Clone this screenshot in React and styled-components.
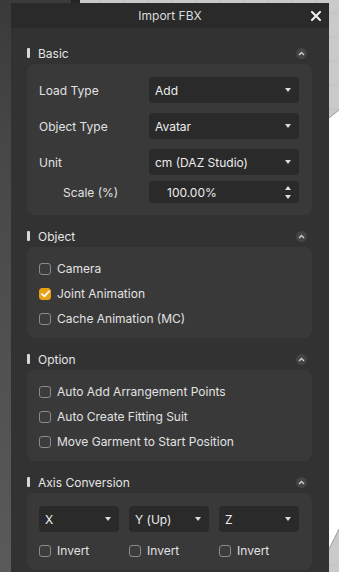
import React from "react";
import styled, { createGlobalStyle } from "styled-components";

const Global = createGlobalStyle`
  html, body { margin: 0; padding: 0; }
  body { font-family: Inter, "Noto Sans", Arial, sans-serif; background: #c9c9c9; }
  * { box-sizing: border-box; }
`;

const Page = styled.div`
  position: relative;
  width: 339px;
  height: 572px;
  overflow: hidden;
  padding: 3px 10px 0 11px;
`;

const Backdrop = styled.svg`
  position: absolute;
  inset: 0;
  z-index: 0;
`;

const Dialog = styled.div`
  position: relative;
  z-index: 1;
  width: 318px;
  height: 600px;
  background: #323232;
  display: flex;
  flex-direction: column;
`;

const TitleBar = styled.div`
  height: 25px;
  background: #2a2a2a;
  display: flex;
  align-items: center;
  justify-content: center;
  position: relative;
  color: #dcdcdc;
  font-size: 12px;
`;

const CloseButton = styled.button`
  position: absolute;
  right: 8px;
  top: 7px;
  width: 11px;
  height: 11px;
  padding: 0;
  border: 0;
  background: none;
  display: flex;
  align-items: center;
  justify-content: center;
`;

const Body = styled.div`
  padding: 14px 17px 0 16px;
  display: flex;
  flex-direction: column;
  gap: 10px;
`;

const Section = styled.section`
  display: flex;
  flex-direction: column;
`;

const Header = styled.div`
  height: 22px;
  display: flex;
  align-items: center;
  color: #e4e4e4;
  font-size: 12px;
  padding-right: 5px;
`;

const HeaderBar = styled.span`
  width: 3px;
  height: 10px;
  background: #d8d8d8;
  margin-right: 8px;
  border-radius: 1px;
`;

const HeaderTitle = styled.span`
  flex: 1;
`;

const CollapseIcon = styled.span`
  width: 11px;
  height: 11px;
  border-radius: 50%;
  background: #444;
  display: flex;
  align-items: center;
  justify-content: center;
`;

const Panel = styled.div`
  background: #393939;
  border-radius: 8px;
  padding: ${(p) => p.$pad || "9px 12px 7px"};
  display: flex;
  flex-direction: column;
  gap: ${(p) => p.$gap || "0px"};
`;

const FieldRow = styled.div`
  display: grid;
  grid-template-columns: 110px 150px;
  align-items: center;
  margin-top: ${(p) => p.$pullUp || 0}px;
`;

const Label = styled.span`
  color: #e2e2e2;
  font-size: 12px;
  padding-left: ${(p) => (p.$indent ? "24px" : "0")};
`;

const Select = styled.div`
  height: ${(p) => p.$h || 26}px;
  background: #2a2a2a;
  border-radius: 4px;
  display: flex;
  align-items: center;
  padding: 0 6px 0 ${(p) => p.$padLeft || 6}px;
  color: #ececec;
  font-size: 12px;
`;

const SelectText = styled.span`
  flex: 1;
  white-space: nowrap;
`;

const Arrow = styled.span`
  width: 0;
  height: 0;
  border-left: 3px solid transparent;
  border-right: 3px solid transparent;
  border-top: 4px solid #dcdcdc;
  margin-right: 2px;
`;

const Spinner = styled.span`
  display: flex;
  flex-direction: column;
  gap: 5px;
  margin-right: 2px;
`;

const SpinArrow = styled.span`
  width: 0;
  height: 0;
  border-left: 3px solid transparent;
  border-right: 3px solid transparent;
  ${(p) =>
    p.$up ? "border-bottom: 4px solid #e0e0e0;" : "border-top: 4px solid #e0e0e0;"}
`;

const CheckRow = styled.label`
  height: 25px;
  display: flex;
  align-items: center;
  gap: 6px;
  color: #e2e2e2;
  font-size: 12px;
`;

const Box = styled.span`
  width: 12px;
  height: 12px;
  border-radius: 3px;
  flex: none;
  background: ${(p) => (p.$checked ? "#e8a015" : "#3c3c3c")};
  border: 1px solid ${(p) => (p.$checked ? "#e8a015" : "#8a8a8a")};
  display: flex;
  align-items: center;
  justify-content: center;
`;

const AxisGrid = styled.div`
  display: grid;
  grid-template-columns: repeat(3, 80px);
  column-gap: 10px;
`;

function Check({ label, checked }) {
  return (
    <CheckRow>
      <Box $checked={checked}>
        {checked && (
          <svg width="9" height="8" viewBox="0 0 9 8">
            <path d="M1 4.2 L3.4 6.4 L8 1.4" fill="none" stroke="#ffffff" strokeWidth="1.8" strokeLinecap="round" strokeLinejoin="round" />
          </svg>
        )}
      </Box>
      <span>{label}</span>
    </CheckRow>
  );
}

function SectionBlock({ title, children }) {
  return (
    <Section>
      <Header>
        <HeaderBar />
        <HeaderTitle>{title}</HeaderTitle>
        <CollapseIcon>
          <svg width="7" height="5" viewBox="0 0 7 5">
            <path d="M1 4 L3.5 1.5 L6 4" fill="none" stroke="#cfcfcf" strokeWidth="1.4" />
          </svg>
        </CollapseIcon>
      </Header>
      {children}
    </Section>
  );
}

function Dropdown({ value }) {
  return (
    <Select>
      <SelectText>{value}</SelectText>
      <Arrow />
    </Select>
  );
}

function BackdropArt() {
  const vlines = [];
  for (let x = 4; x < 339; x += 24) vlines.push(x);
  const hlines = [];
  for (let y = 13; y < 572; y += 24) hlines.push(y);
  return (
    <Backdrop width="339" height="572" viewBox="0 0 339 572">
      <defs>
        <linearGradient id="leftg" x1="0" y1="0" x2="0" y2="1">
          <stop offset="0" stopColor="#3a3a3a" />
          <stop offset="0.25" stopColor="#474747" />
          <stop offset="1" stopColor="#5a5a5a" />
        </linearGradient>
      </defs>
      <rect x="0" y="0" width="339" height="572" fill="#cacaca" />
      {vlines.map((x) => (
        <line key={"v" + x} x1={x} y1="0" x2={x} y2="572" stroke="#bfbfbf" strokeWidth="1" />
      ))}
      {hlines.map((y) => (
        <line key={"h" + y} x1="0" y1={y} x2="339" y2={y} stroke="#bfbfbf" strokeWidth="1" />
      ))}
      <polygon points="329,118 339,110 339,529 329,549" fill="#ffffff" />
      <line x1="329" y1="118" x2="339" y2="110" stroke="#8a8a8a" strokeWidth="0.8" />
      <line x1="329" y1="549" x2="339" y2="529" stroke="#8a8a8a" strokeWidth="0.8" />
      <rect x="0" y="0" width="71" height="3" fill="#3b3b3d" />
      <rect x="71" y="0" width="9" height="3" fill="#252525" />
      <rect x="0" y="0" width="11" height="572" fill="url(#leftg)" />
    </Backdrop>
  );
}

export default function App() {
  return (
    <>
      <Global />
      <Page>
        <BackdropArt />
        <Dialog>
          <TitleBar>
            Import FBX
            <CloseButton aria-label="Close">
              <svg width="10" height="10" viewBox="0 0 10 10">
                <path d="M1 1 L9 9 M9 1 L1 9" stroke="#f2f2f2" strokeWidth="2" strokeLinecap="square" />
              </svg>
            </CloseButton>
          </TitleBar>
          <Body>
            <SectionBlock title="Basic">
              <Panel $pad="13px 12px 12px" $gap="10px">
                <FieldRow>
                  <Label>Load Type</Label>
                  <Dropdown value="Add" />
                </FieldRow>
                <FieldRow>
                  <Label>Object Type</Label>
                  <Dropdown value="Avatar" />
                </FieldRow>
                <FieldRow>
                  <Label>Unit</Label>
                  <Dropdown value="cm (DAZ Studio)" />
                </FieldRow>
                <FieldRow $pullUp={-4}>
                  <Label $indent>Scale (%)</Label>
                  <Select $h={22} $padLeft={18}>
                    <SelectText>100.00%</SelectText>
                    <Spinner>
                      <SpinArrow $up />
                      <SpinArrow />
                    </Spinner>
                  </Select>
                </FieldRow>
              </Panel>
            </SectionBlock>
            <SectionBlock title="Object">
              <Panel>
                <Check label="Camera" />
                <Check label="Joint Animation" checked />
                <Check label="Cache Animation (MC)" />
              </Panel>
            </SectionBlock>
            <SectionBlock title="Option">
              <Panel>
                <Check label="Auto Add Arrangement Points" />
                <Check label="Auto Create Fitting Suit" />
                <Check label="Move Garment to Start Position" />
              </Panel>
            </SectionBlock>
            <SectionBlock title="Axis Conversion">
              <Panel $pad="13px 12px 7px" $gap="6px">
                <AxisGrid>
                  <Dropdown value="X" />
                  <Dropdown value="Y (Up)" />
                  <Dropdown value="Z" />
                </AxisGrid>
                <AxisGrid>
                  <Check label="Invert" />
                  <Check label="Invert" />
                  <Check label="Invert" />
                </AxisGrid>
              </Panel>
            </SectionBlock>
          </Body>
        </Dialog>
      </Page>
    </>
  );
}
